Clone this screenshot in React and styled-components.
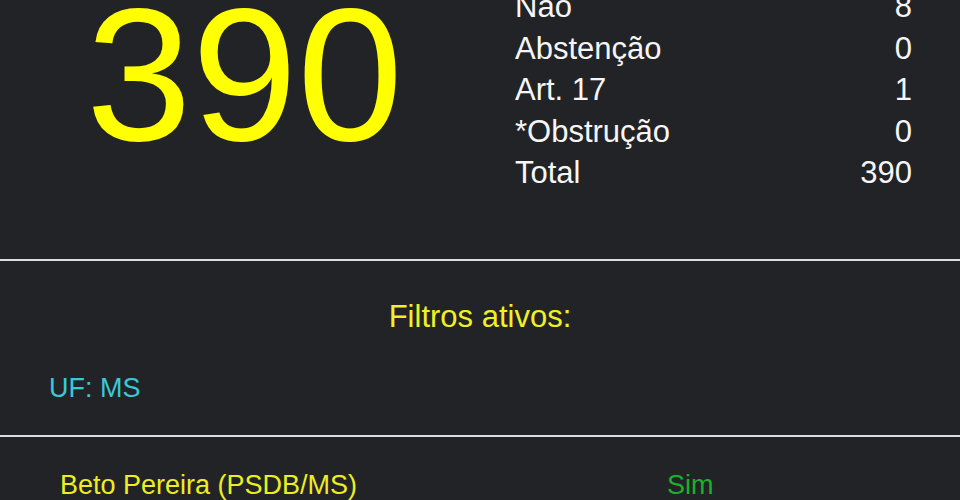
import React from "react";
import styled, { createGlobalStyle } from "styled-components";

const GlobalStyle = createGlobalStyle`
  html, body {
    margin: 0;
    padding: 0;
    background-color: #222327;
    overflow: hidden;
  }
  body {
    font-family: "Liberation Sans", Arial, Helvetica, sans-serif;
  }
`;

const results = [
  { label: "Não", value: 8 },
  { label: "Abstenção", value: 0 },
  { label: "Art. 17", value: 1 },
  { label: "*Obstrução", value: 0 },
  { label: "Total", value: 390 },
];

const votes = [{ name: "Beto Pereira (PSDB/MS)", vote: "Sim" }];

export default function App() {
  return (
    <>
      <GlobalStyle />
      <Screen>
        <Summary>
          <BigCount>390</BigCount>
          <Stats>
            {results.map((r) => (
              <StatRow key={r.label}>
                <span>{r.label}</span>
                <span>{r.value}</span>
              </StatRow>
            ))}
          </Stats>
        </Summary>
        <Divider />
        <Filters>
          <FilterTitle>Filtros ativos:</FilterTitle>
          <FilterItem>UF: MS</FilterItem>
        </Filters>
        <Divider />
        <VoteList>
          {votes.map((v) => (
            <VoteRow key={v.name}>
              <Deputy>{v.name}</Deputy>
              <Vote $kind={v.vote}>{v.vote}</Vote>
            </VoteRow>
          ))}
        </VoteList>
      </Screen>
    </>
  );
}

const Screen = styled.div`
  width: 960px;
  height: 521px;
  margin-top: -21px;
  background-color: #222327;
  color: #f4f4f4;
  overflow: hidden;
`;

const Summary = styled.div`
  display: grid;
  grid-template-columns: 489px 1fr;
  align-items: start;
  padding-right: 48px;
  padding-bottom: 65.5px;
`;

const BigCount = styled.div`
  font-size: 190px;
  line-height: 1;
  color: #ffff00;
  text-align: center;
`;

const Stats = styled.div`
  display: flex;
  flex-direction: column;
  padding-top: 7px;
  padding-left: 26px;
`;

const StatRow = styled.div`
  display: flex;
  justify-content: space-between;
  font-size: 31px;
  line-height: 41.5px;
  color: #f6f6f6;
`;

const Divider = styled.div`
  height: 2px;
  background-color: #dcdcdc;
`;

const Filters = styled.div`
  display: flex;
  flex-direction: column;
  gap: 37px;
  padding: 37.7px 0 31px 49px;
`;

const FilterTitle = styled.div`
  font-size: 31px;
  line-height: 36px;
  color: #f0f024;
  text-align: center;
  margin-left: -49px;
`;

const FilterItem = styled.div`
  font-size: 27px;
  line-height: 32px;
  color: #38c9d6;
`;

const VoteList = styled.div`
  display: flex;
  flex-direction: column;
  padding-top: 32px;
`;

const VoteRow = styled.div`
  display: grid;
  grid-template-columns: 607px 1fr;
  padding-left: 60px;
  font-size: 27px;
  line-height: 32px;
`;

const Deputy = styled.span`
  color: #eded22;
`;

const Vote = styled.span`
  color: ${(p) => (p.$kind === "Sim" ? "#1fae2c" : "#e0383e")};
`;
